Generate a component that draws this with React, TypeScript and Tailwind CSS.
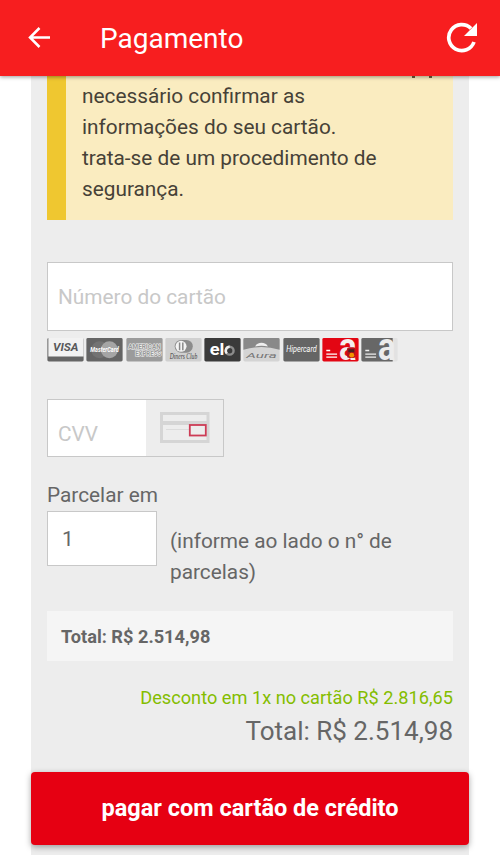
import React from "react";

const brand = "block h-[23.5px] w-[37px] shrink-0 overflow-visible";

function CardLogos() {
  return (
    <div className="mt-[7px] flex h-[23px] gap-[2.3px]">
      <svg className={brand} viewBox="0 0 37 24">
        <rect width="37" height="24" rx="1.5" fill="#656565" />
        <path d="M1 0H37V19H1Z" fill="#f2f2f2" />
        <text x="18.8" y="13.5" textAnchor="middle" textLength="26" lengthAdjust="spacingAndGlyphs" fontSize="11.5" fontWeight="700" fontStyle="italic" fill="#58585a">VISA</text>
      </svg>
      <svg className={brand} viewBox="0 0 37 24">
        <rect width="37" height="24" rx="1.5" fill="#656565" />
        <circle cx="13.5" cy="12" r="8.7" fill="#737373" />
        <circle cx="23.5" cy="12" r="8.7" fill="#a5a5a5" />
        <text x="18.5" y="14.8" textAnchor="middle" textLength="29" lengthAdjust="spacingAndGlyphs" fontSize="7.5" fontWeight="700" fontStyle="italic" fill="#fff">MasterCard</text>
      </svg>
      <svg className={brand} viewBox="0 0 37 24">
        <rect width="37" height="24" rx="1.5" fill="#9b9b9b" />
        <g fontSize="7" fontWeight="700" fill="#999" stroke="#eee" strokeWidth="1.2" paintOrder="stroke">
          <text x="2" y="11" textLength="33" lengthAdjust="spacingAndGlyphs">AMERICAN</text>
          <text x="9" y="18" textLength="26.5" lengthAdjust="spacingAndGlyphs">EXPRESS</text>
        </g>
      </svg>
      <svg className={brand} viewBox="0 0 37 24">
        <rect width="37" height="24" rx="1.5" fill="#d0d0d0" />
        <rect x="9.5" y="2" width="18.5" height="13" rx="6.5" fill="#8c8c8c" />
        <circle cx="16" cy="8.5" r="5.6" fill="#f4f4f4" />
        <path d="M14.5 4.5V12.5M17.8 4.5V12.5" stroke="#888" strokeWidth="1.5" />
        <text x="18.5" y="21.3" textAnchor="middle" textLength="28" lengthAdjust="spacingAndGlyphs" fontSize="7.5" fontStyle="italic" fill="#444" className="font-['Liberation_Serif',serif]">Diners Club</text>
      </svg>
      <svg className={brand} viewBox="0 0 37 24">
        <rect width="37" height="24" rx="1.5" fill="#3a3a3a" />
        <text x="5.5" y="17.5" textLength="15" lengthAdjust="spacingAndGlyphs" fontSize="17" fontWeight="700" fill="#fff">el</text>
        <circle cx="25.8" cy="13" r="4" fill="none" stroke="#8c8c8c" strokeWidth="2.5" />
        <path d="M23 15.8A4 4 0 0 1 25.8 9" fill="none" stroke="#eee" strokeWidth="2.5" />
      </svg>
      <svg className={brand} viewBox="0 0 37 24">
        <rect width="37" height="24" rx="1.5" fill="#d4d4d4" />
        <path d="M0 1.5Q0 0 1.5 0H35.5Q37 0 37 1.5V12Q18.5 6.5 0 12Z" fill="#898989" />
        <path d="M12 8.6C14 3.7 23 3.7 25 8.6Q18.5 7.3 12 8.6Z" fill="#eee" />
        <text x="18.5" y="20.5" textAnchor="middle" textLength="31" lengthAdjust="spacingAndGlyphs" fontSize="7.5" fontStyle="italic" fill="#777">Aura</text>
      </svg>
      <svg className={brand} viewBox="0 0 37 24">
        <rect width="37" height="24" rx="1.5" fill="#656565" />
        <text x="18.5" y="14" textAnchor="middle" textLength="31" lengthAdjust="spacingAndGlyphs" fontSize="8.5" fontStyle="italic" fill="#fff">Hipercard</text>
      </svg>
      <svg className={brand} viewBox="0 0 37 24">
        <rect width="37" height="24" rx="1.5" fill="#e30613" />
        <text x="17" y="22.5" textLength="18" lengthAdjust="spacingAndGlyphs" fontSize="39" fontWeight="700" fill="#f5eeee">a</text>
        <path d="M4 12.8H8M4 16.5H15M4 19.5H15" stroke="#fff" strokeWidth="1.4" />
        <rect x="25" y="9.5" width="9" height="11" rx="2.5" fill="#b5121b" />
        <rect x="26.5" y="11.5" width="6" height="3" fill="#4b2020" />
        <circle cx="30" cy="17.5" r="2.5" fill="#f39200" />
      </svg>
      <svg className={brand} viewBox="0 0 37 24">
        <rect width="37" height="24" rx="1.5" fill="#e2e2e2" />
        <path d="M1.5 0H32V24H1.5Q0 24 0 22.5V1.5Q0 0 1.5 0Z" fill="#676767" />
        <text x="17" y="22.5" textLength="18" lengthAdjust="spacingAndGlyphs" fontSize="39" fontWeight="700" fill="#ececec">a</text>
        <path d="M4 12.8H8M4 16.5H15M4 19.5H15" stroke="#eee" strokeWidth="1.4" />
      </svg>
    </div>
  );
}

export default function App() {
  return (
    <div className="flex h-[855px] w-[500px] flex-col overflow-hidden bg-white font-[Roboto,sans-serif] text-[20.8px] leading-[31px] text-[#666]">
      <header className="z-10 flex h-[76px] shrink-0 items-center bg-[#f71e1f] pl-[27px] pr-[22px] text-white shadow-[0_1px_4px_rgba(0,0,0,0.4)]">
        <svg className="size-6" viewBox="0 0 24 24" fill="none" stroke="currentColor" strokeWidth="2.5">
          <path d="M23 11.5H3M12.5 2L3 11.5L12.5 21" />
        </svg>
        <h1 className="ml-[49px] flex-1 pt-px text-[28px] font-normal">Pagamento</h1>
        <svg className="h-[32px] w-[32px]" viewBox="0 0 32 32">
          <path d="M28 20A13 13 0 1 1 25 6.5" fill="none" stroke="#fff" strokeWidth="3.7" />
          <path d="M31 1V14H18Z" fill="#fff" />
        </svg>
      </header>

      <main className="mx-[31px] flex flex-1 flex-col bg-[#ededed]">
        <div className="flex flex-col px-4">
          <div className="relative h-[144px] border-l-[19px] border-[#efc730] bg-[#faecc0] pl-4 pt-[5px] text-[#464137]">
            <span className="absolute left-[346px] top-0 h-[2px] w-[3px] bg-[#6b5b3c]" />
            <span className="absolute left-[363px] top-0 h-[2px] w-[3px] bg-[#6b5b3c]" />
            <p>
              necessário confirmar as
              <br />
              informações do seu cartão.
              <br />
              trata-se de um procedimento de
              <br />
              segurança.
            </p>
          </div>

          <input
            className="mt-[42px] h-[69px] border border-[#c8c8c8] bg-white px-[10px] outline-none placeholder:text-[#c8c8c8]"
            placeholder="Número do cartão"
          />
          <CardLogos />

          <div className="mt-[38px] flex h-[58px] w-[177px] border border-[#c8c8c8]">
            <input
              className="w-[98px] bg-white pl-[10px] pt-[12px] outline-none placeholder:text-[#c8c8c8]"
              placeholder="CVV"
            />
            <svg className="ml-[14px] mt-3 h-[32px] w-[50px]" viewBox="0 0 50 32" fill="none">
              <rect x="1.5" y="1.5" width="46.5" height="28" stroke="#d5d5d5" strokeWidth="3" />
              <path d="M1 11H49" stroke="#d5d5d5" strokeWidth="4" />
              <path d="M6 17.5H43" stroke="#dcdcdc" />
              <rect x="29.8" y="13" width="16" height="10.5" fill="#ededed" stroke="#cd3c56" strokeWidth="1.8" />
            </svg>
          </div>

          <label className="mt-[23px]">Parcelar em</label>
          <div className="flex h-[100px]">
            <input
              className="h-[55px] w-[110px] shrink-0 border border-[#c8c8c8] bg-white pl-[14px] outline-none"
              defaultValue="1"
            />
            <p className="ml-[13px] pt-[15px]">
              (informe ao lado o n° de
              <br />
              parcelas)
            </p>
          </div>

          <div className="flex h-[50px] items-center bg-[#f5f5f5] px-[14px] text-[18.2px] font-bold">
            Total: R$ 2.514,98
          </div>
          <p className="mt-[21px] text-right text-[18.2px] text-[#84bd00]">
            Desconto em 1x no cartão R$ 2.816,65
          </p>
          <p className="mt-[3px] text-right text-[26px]">Total: R$ 2.514,98</p>
        </div>

        <button className="mt-[25px] h-[73px] shrink-0 rounded-[4px] bg-[#e60012] text-[23.5px] font-bold text-white shadow-[0_2px_6px_rgba(0,0,0,0.35)]">
          pagar com cartão de crédito
        </button>
      </main>
    </div>
  );
}
